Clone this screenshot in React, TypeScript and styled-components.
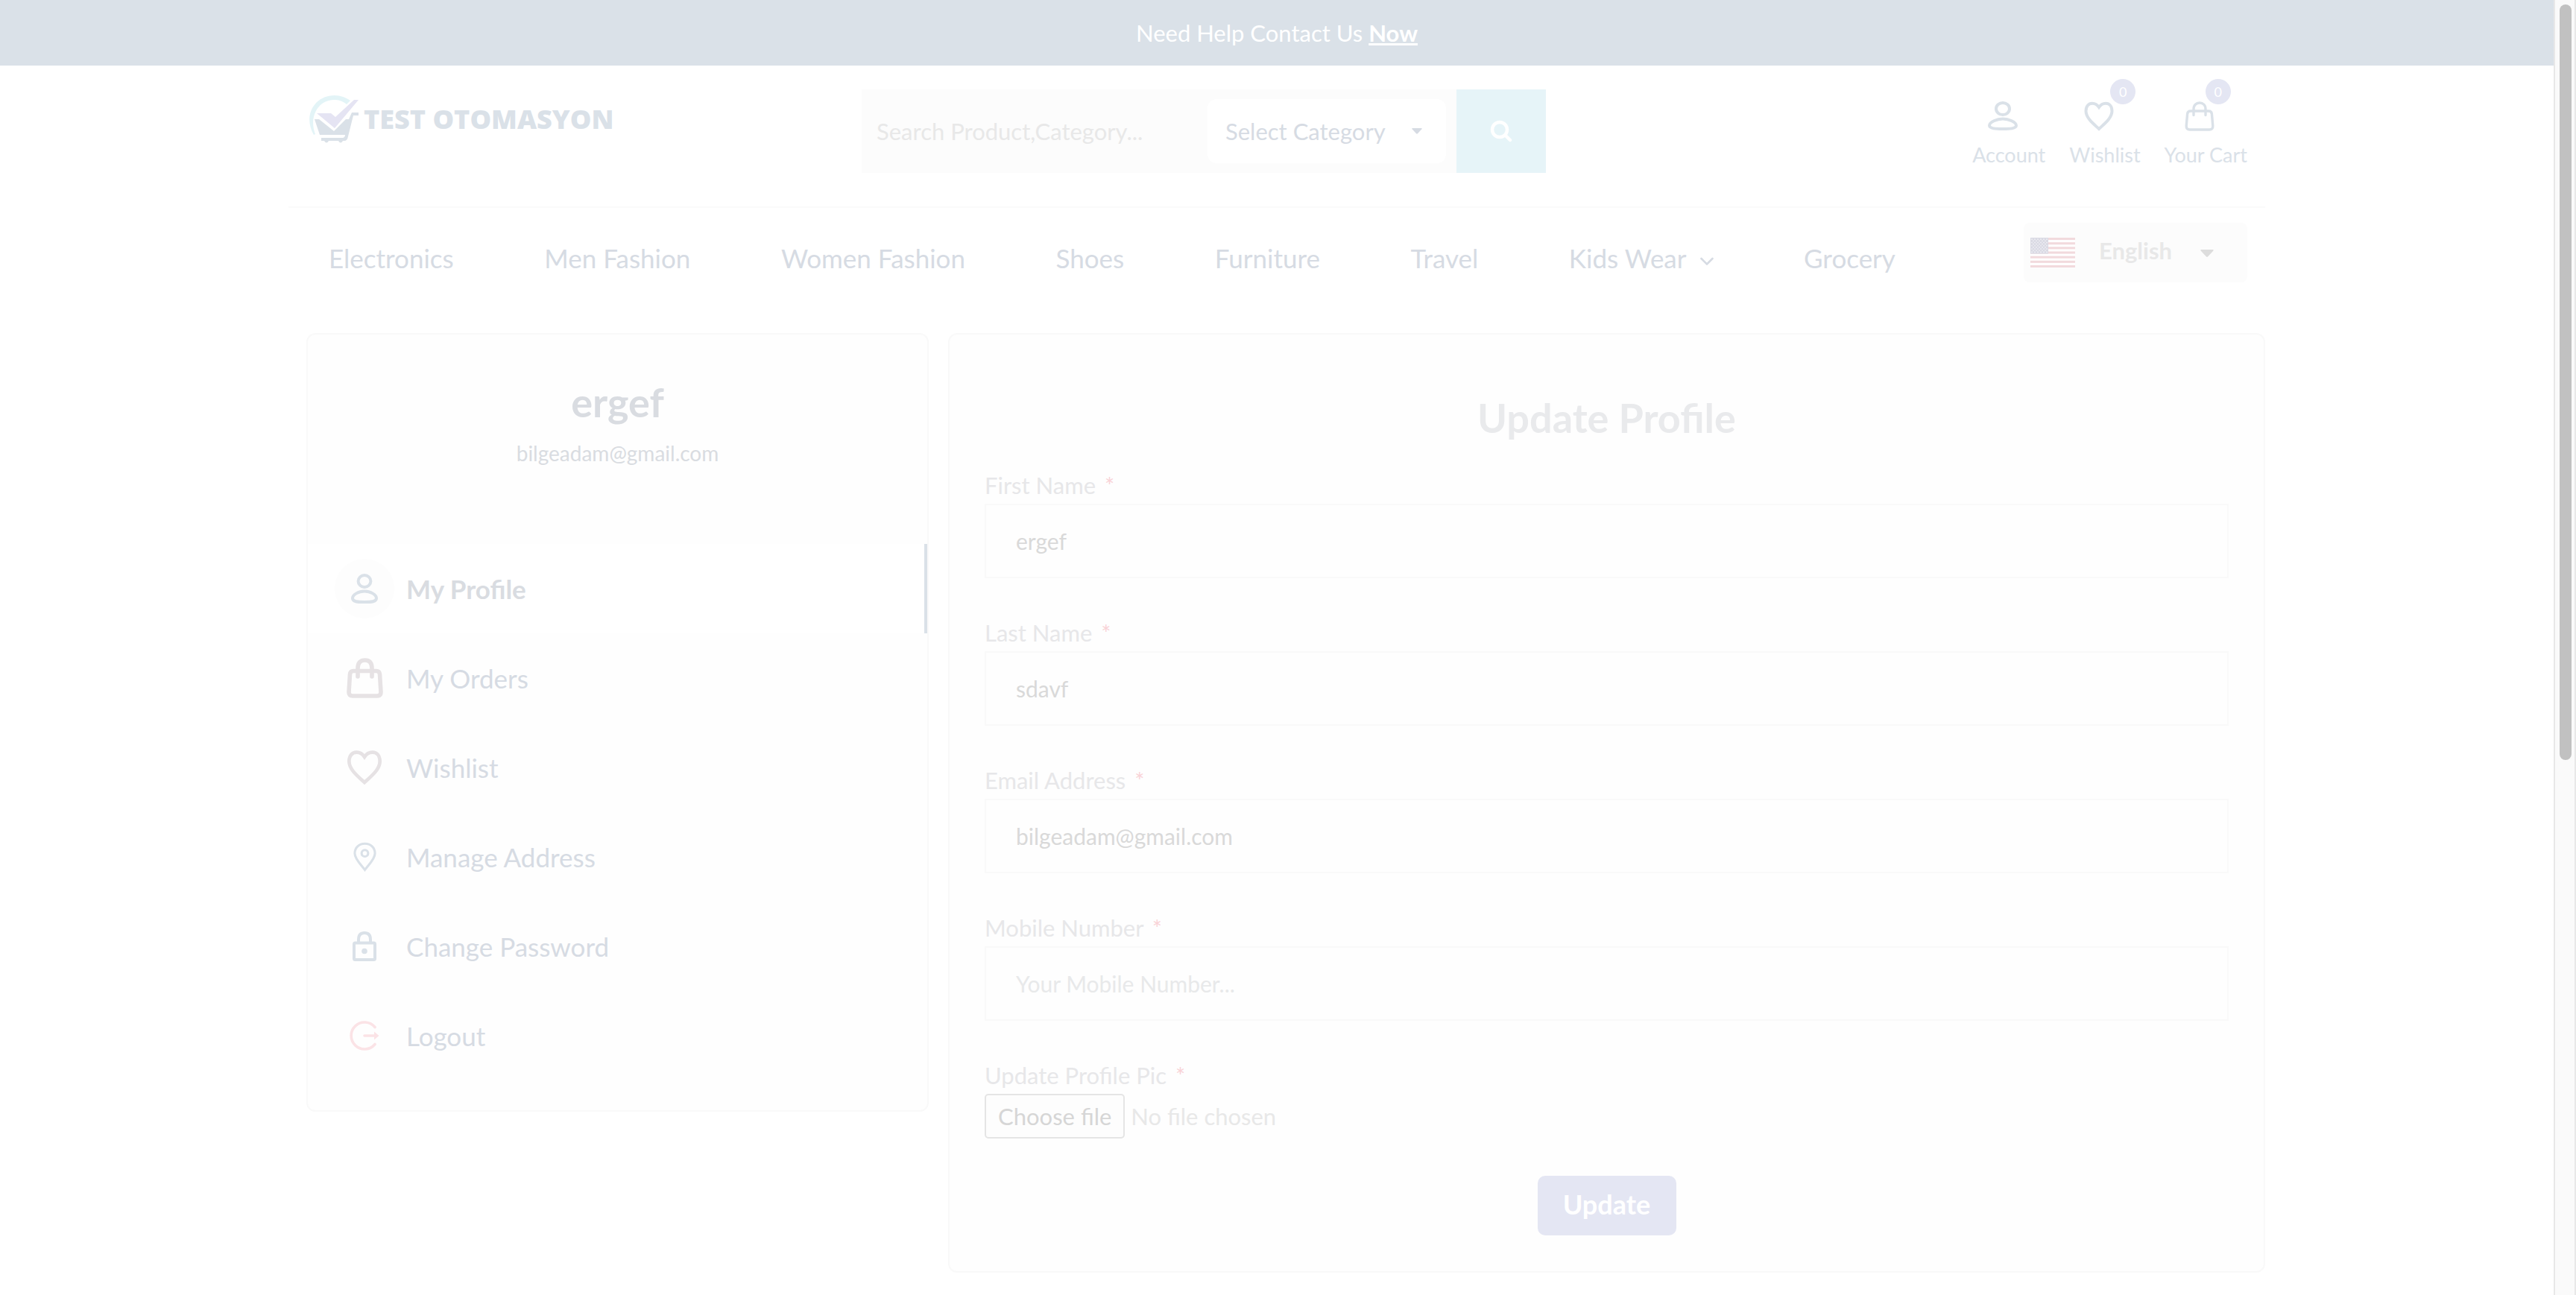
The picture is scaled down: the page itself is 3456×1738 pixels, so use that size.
import React from "react";
import styled, { createGlobalStyle, css } from "styled-components";

const slate = "#dae1e8";
const ink = "#d6dbe3";
const violet = "#e4e6f3";

const GlobalStyle = createGlobalStyle`
  *, *::before, *::after { box-sizing: border-box; }
  body { margin: 0; background: #ffffff; font-family: Lato, "Open Sans", sans-serif; color: ${ink}; }
  h1, h2, p, ul { margin: 0; padding: 0; }
  ul { list-style: none; }
  a { color: inherit; text-decoration: none; }
  button, input, select { font-family: inherit; margin: 0; }
`;

const Shell = styled.div`
  display: flex;
  min-height: 100vh;
`;

const Page = styled.div`
  flex: 1;
  min-width: 0;
`;

const ScrollTrack = styled.div`
  width: 30px;
  padding: 6px;
  background: #fafafa;
  border-left: 2px solid #e8e8e8;
  border-right: 2px solid #e8e8e8;
`;

const ScrollThumb = styled.div`
  width: 16px;
  height: 1014px;
  border-radius: 8px;
  background: #c1c1c1;
`;

const TopBar = styled.div`
  height: 88px;
  background: ${slate};
  color: #ffffff;
  font-size: 31px;
  line-height: 88px;
  text-align: center;

  a { font-weight: 700; text-decoration: underline; }
`;

const Container = styled.div`
  max-width: 2652px;
  margin: 0 auto;
`;

const Header = styled.header`
  display: grid;
  grid-template-columns: 742fr 918fr 941fr;
  align-items: start;
  padding: 32px 24px 45px 27px;
  border-bottom: 2px solid #fbfbfb;
`;

const Logo = styled.a`
  display: flex;
  align-items: center;
  gap: 4px;
  padding-top: 5px;
  color: ${slate};
  font-family: "Open Sans", sans-serif;
  font-size: 36px;
  font-weight: 800;
  line-height: 70px;

  svg { flex: none; }
`;

const Search = styled.form`
  display: flex;
  align-items: center;
  height: 112px;
  background: #fcfcfc;
`;

const SearchInput = styled.input`
  flex: 1;
  min-width: 0;
  height: 100%;
  padding: 0 20px;
  border: 0;
  background: transparent;
  color: #d9d9d9;
  font-size: 31px;

  &::placeholder { color: #e8e8e8; opacity: 1; }
`;

const SelectWrap = styled.span`
  position: relative;
  display: block;

  > svg {
    position: absolute;
    right: 32px;
    top: 50%;
    margin-top: -4px;
    pointer-events: none;
  }
`;

const CategorySelect = styled.select`
  appearance: none;
  width: 320px;
  height: 86px;
  margin-right: 14px;
  padding: 0 24px;
  border: 0;
  border-radius: 12px;
  background: #ffffff;
  color: ${ink};
  font-size: 31px;
`;

const CategoryWrap = styled(SelectWrap)`
  > svg { right: 46px; }
`;

const SearchButton = styled.button`
  display: flex;
  align-items: center;
  justify-content: center;
  width: 120px;
  height: 100%;
  padding: 0;
  border: 0;
  background: #e6f4f8;
  color: #ffffff;
`;

const Actions = styled.nav`
  display: flex;
  justify-content: flex-end;
  gap: 32px;
  padding-top: 16px;
`;

const Action = styled.a`
  position: relative;
  display: flex;
  flex-direction: column;
  align-items: center;
  gap: 14px;
  color: ${slate};
  font-size: 27px;
  line-height: 36px;

  svg { margin-right: 16px; }
`;

const Badge = styled.span`
  position: absolute;
  left: 55px;
  top: -30px;
  width: 34px;
  height: 34px;
  border-radius: 50%;
  background: ${violet};
  color: #ffffff;
  font-size: 18px;
  line-height: 34px;
  text-align: center;
`;

const NavRow = styled.div`
  display: flex;
  align-items: flex-start;
  gap: 172px;
  padding: 20px 24px 54px 54px;
`;

const NavList = styled.ul`
  flex: 1;
  display: flex;
  justify-content: space-between;
  font-size: 35px;
  line-height: 94px;
  white-space: nowrap;

  a { display: flex; align-items: center; gap: 18px; }
`;

const Language = styled.div`
  display: flex;
  align-items: center;
  width: 300px;
  height: 80px;
  padding-left: 9px;
  border-radius: 8px;
  background: #fcfcfc;

  > svg { flex: none; }
  > span { flex: 1; }
  > span > svg { right: 45px; }
`;

const LanguageSelect = styled.select`
  appearance: none;
  width: 100%;
  height: 80px;
  padding: 0 32px 6px;
  border: 0;
  background: transparent;
  color: #e8e8e8;
  font-size: 31px;
  font-weight: 700;
`;

const Columns = styled.main`
  display: grid;
  grid-template-columns: minmax(0, 835px) minmax(0, 1fr);
  gap: 26px;
  align-items: start;
  padding: 0 0 30px 24px;
`;

const Card = styled.section`
  border: 2px solid #f9f9f9;
  border-radius: 12px;
  background: #fefefe;
`;

const AccountCard = styled(Card)`
  padding-bottom: 40px;
`;

const AccountHead = styled.div`
  padding: 55px 0 102px;
  color: #d9dce1;
  text-align: center;
`;

const Title = styled.h1`
  font-size: 54px;
  font-weight: 700;
  line-height: 72px;
`;

const AccountEmail = styled.p`
  margin-top: 12px;
  font-size: 28px;
  line-height: 40px;
`;

const MenuLink = styled.a<{ $active?: boolean }>`
  display: flex;
  align-items: center;
  gap: 16px;
  height: 120px;
  padding-left: 36px;
  font-size: 35px;
  ${(p) =>
    p.$active &&
    css`
      border-right: 4px solid ${slate};
      background: #ffffff;
      color: #d9dce1;
      font-weight: 700;
    `}
`;

const MenuIcon = styled.span<{ $tint: string; $active?: boolean }>`
  display: flex;
  align-items: center;
  justify-content: center;
  width: 80px;
  height: 80px;
  border-radius: 50%;
  background: ${(p) => (p.$active ? "#fdfdfd" : "#fefefe")};
  color: ${(p) => p.$tint};
`;

const ProfileCard = styled(Card)`
  padding: 76px 47px 48px;
`;

const FormTitle = styled(Title).attrs({ as: "h2" })`
  margin-bottom: 34px;
  color: #e9eaec;
  text-align: center;
`;

const ProfileForm = styled.form`
  display: flex;
  flex-direction: column;
  gap: 50px;
`;

const Fields = styled.div`
  display: flex;
  flex-direction: column;
  gap: 53px;
`;

const Field = styled.div`
  display: flex;
  flex-direction: column;
  gap: 5px;
`;

const FieldLabel = styled.label`
  color: #e7e7e9;
  font-size: 31px;
  line-height: 40px;

  span { margin-left: 4px; color: #f9d3d7; }
`;

const TextInput = styled.input`
  width: 100%;
  height: 100px;
  padding: 0 40px;
  border: 2px solid #f9f9f9;
  background: #fefefe;
  color: #d9d9d9;
  font-size: 30px;

  &::placeholder { color: #e8e9ea; opacity: 1; }
`;

const FileRow = styled.div`
  position: relative;
  display: flex;
  align-items: center;
  gap: 8px;
  color: #e8e8e8;
  font-size: 31px;
`;

const FileInput = styled.input`
  position: absolute;
  width: 1px;
  height: 1px;
  opacity: 0;
`;

const FileButton = styled.label`
  height: 60px;
  padding: 0 16px;
  border: 2px solid #e5e5e5;
  border-radius: 5px;
  background: #fdfdfd;
  color: #d6d6d6;
  line-height: 56px;
`;

const SubmitButton = styled.button`
  align-self: center;
  width: 186px;
  height: 80px;
  padding: 0 0 4px;
  border: 0;
  border-radius: 10px;
  background: ${violet};
  color: #ffffff;
  font-size: 36px;
  font-weight: 700;
`;

type IconProps = { stroke?: number };

const UserIcon = () => (
  <svg width="40" height="40" viewBox="0 0 40 40" fill="none" stroke="currentColor" strokeWidth="4">
    <ellipse cx="20" cy="10" rx="9" ry="8" />
    <path d="M20 23.5C28 23.5 38 28 38 32.5C38 36.5 29 37 20 37S2 36.5 2 32.5C2 28 12 23.5 20 23.5Z" />
  </svg>
);

const ProfileIcon = () => (
  <svg width="36" height="40" viewBox="0 0 36 40" fill="none" stroke="currentColor" strokeWidth="4">
    <ellipse cx="18" cy="10" rx="8.4" ry="8" />
    <path d="M18 23.5C26 23.5 34 28 34 33C34 37.5 28 38 18 38S2 37.5 2 33C2 28 10 23.5 18 23.5Z" />
  </svg>
);

const HeartIcon = ({ width = 40, height = 40, stroke = 4 }: IconProps & { width?: number; height?: number }) => (
  <svg width={width} height={height} viewBox="0 0 40 39" fill="none" stroke="currentColor" strokeWidth={stroke}>
    <path d="M20 36.5C13 30 2.5 22 2.5 12.5C2.5 6 6 2.3 11 2.3C15 2.3 18 4.5 20 7.5C22 4.5 25 2.3 29 2.3C34 2.3 37.5 6 37.5 12.5C37.5 22 27 30 20 36.5Z" />
  </svg>
);

const BagIcon = ({ stroke = 3.4 }: IconProps) => (
  <svg width="40" height="40" viewBox="0 0 40 40" fill="none" stroke="currentColor" strokeWidth={stroke} strokeLinecap="round" strokeLinejoin="round">
    <path d="M8 13H32Q36 13 36.4 17L37.8 33Q38 38 33 38H7Q2 38 2.2 33L3.6 17Q4 13 8 13Z" />
    <path d="M12 18.5V10.5C12 5 15.5 2 20 2S28 5 28 10.5V18.5" />
  </svg>
);

const OrdersIcon = () => (
  <svg width="49" height="54" viewBox="0 0 49 54" fill="none" stroke="currentColor" strokeWidth="5.6" strokeLinecap="round" strokeLinejoin="round">
    <path d="M9 17.5H40Q44 17.5 44.5 22L46 46Q46 51 41 51H8Q3 51 3 46L4.5 22Q5 17.5 9 17.5Z" />
    <path d="M15 25V14C15 6 19 3 24.500 3S34 6 34 14V25" />
  </svg>
);

const PinIcon = () => (
  <svg width="31" height="40" viewBox="0 0 32 40" fill="none" stroke="currentColor" strokeWidth="3.2">
    <path d="M16 38C11 31 2 23 2 15C2 7 8 1.6 16 1.6S30 7 30 15C30 23 21 31 16 38Z" />
    <circle cx="16" cy="15" r="4.5" />
  </svg>
);

const LockIcon = () => (
  <svg width="32" height="40" viewBox="0 0 32 40" fill="none" stroke="currentColor" strokeWidth="4">
    <rect x="2" y="15.500" width="28" height="22.500" rx="1.500" />
    <path d="M8 15V11C8 5 11 2 16 2S24 5 24 11V15" />
    <circle cx="16" cy="26.5" r="3.8" fill="currentColor" stroke="none" />
  </svg>
);

const LogoutIcon = () => (
  <svg width="40" height="40" viewBox="0 0 40 40" fill="none" stroke="currentColor" strokeWidth="3.6" strokeLinecap="round">
    <path d="M34 8.5A18 18 0 1 0 34 31.5" />
    <path d="M20 20H34" />
    <path d="M33 14.5L39.5 20L33 25.5Z" fill="currentColor" stroke="none" />
  </svg>
);

const SearchIcon = () => (
  <svg width="30" height="30" viewBox="0 0 30 30" fill="none" stroke="currentColor" strokeWidth="4.5" strokeLinecap="round">
    <circle cx="13" cy="13" r="10" />
    <path d="M20.5 20.5L27 27" />
  </svg>
);

const Caret = ({ width, height, color }: { width: number; height: number; color: string }) => (
  <svg width={width} height={height} viewBox="0 0 18 10" preserveAspectRatio="none" fill={color}>
    <path d="M1.5 0H16.5Q18.6 .4 17 2L10.2 9.2Q9 10.4 7.8 9.2L1 2Q-.6 .4 1.5 0Z" />
  </svg>
);

const Chevron = () => (
  <svg width="18" height="24" viewBox="0 0 18 24" fill="none" stroke="currentColor" strokeWidth="2.6" strokeLinecap="round" strokeLinejoin="round">
    <path d="M1.5 13L9 20.5L16.5 13" />
  </svg>
);

const LogoMark = () => (
  <svg width="70" height="70" viewBox="0 0 70 70">
    <path d="M7 56C-8 30 8 3 35 3C43 3 50 6 56 10L51 15C45 10 40 9 34 9C13 9 0 32 9 55Z" fill="#e3f4f7" />
    <path d="M11 27H30L36 32L61 9H67L35 47Z" fill="#e5e4f3" />
    <path d="M8 35H14L34 51L50 35H54L58 26H67V30H60L53 58Q52 64 48 64H46Q43 69 40 64H27Q24 69 21 64H17V60H46Q49 59 49 56H15Z" fill={slate} />
  </svg>
);

const UsFlag = () => (
  <svg width="60" height="40" viewBox="0 0 60 39" preserveAspectRatio="none">
    <rect width="60" height="39" fill="#ffffff" />
    {Array.from({ length: 7 }, (_, i) => (
      <rect key={i} y={i * 6} width="60" height="3" fill="#f2dadd" />
    ))}
    <rect width="24" height="21" fill="#dadae4" />
    {Array.from({ length: 9 }, (_, row) =>
      Array.from({ length: row % 2 ? 5 : 6 }, (_, col) => (
        <circle key={`${row}-${col}`} cx={2 + col * 4 + (row % 2) * 2} cy={2.1 + row * 2.1} r="0.8" fill="#f4f4f8" />
      ))
    )}
  </svg>
);

const categories = ["Electronics", "Men Fashion", "Women Fashion", "Shoes", "Furniture", "Travel", "Kids Wear", "Grocery"];

const menu = [
  { label: "My Profile", icon: <ProfileIcon />, tint: slate, active: true },
  { label: "My Orders", icon: <OrdersIcon />, tint: "#e6e2e4" },
  { label: "Wishlist", icon: <HeartIcon width={48} height={46} />, tint: "#e6e2e4" },
  { label: "Manage Address", icon: <PinIcon />, tint: slate },
  { label: "Change Password", icon: <LockIcon />, tint: slate },
  { label: "Logout", icon: <LogoutIcon />, tint: "#fbe3e6" },
];

const textFields = [
  { id: "first-name", label: "First Name", value: "ergef" },
  { id: "last-name", label: "Last Name", value: "sdavf" },
  { id: "email", label: "Email Address", value: "bilgeadam@gmail.com", type: "email" },
  { id: "mobile", label: "Mobile Number", placeholder: "Your Mobile Number...", type: "tel" },
];

export default function App() {
  return (
    <Shell>
      <GlobalStyle />
      <Page>
        <TopBar>
          Need Help Contact Us <a href="#contact">Now</a>
        </TopBar>
        <Container>
          <Header>
            <Logo href="#home">
              <LogoMark />
              TEST OTOMASYON
            </Logo>
            <Search role="search">
              <SearchInput type="text" placeholder="Search Product,Category..." aria-label="Search products" />
              <CategoryWrap>
                <CategorySelect aria-label="Category">
                  <option>Select Category</option>
                </CategorySelect>
                <Caret width={14} height={8} color={ink} />
              </CategoryWrap>
              <SearchButton type="button" aria-label="Search">
                <SearchIcon />
              </SearchButton>
            </Search>
            <Actions aria-label="Account">
              <Action href="#account">
                <UserIcon />
                Account
              </Action>
              <Action href="#wishlist">
                <HeartIcon />
                Wishlist
                <Badge>0</Badge>
              </Action>
              <Action href="#cart">
                <BagIcon />
                Your Cart
                <Badge>0</Badge>
              </Action>
            </Actions>
          </Header>
          <NavRow>
            <NavList>
              {categories.map((name) => (
                <li key={name}>
                  <a href="#category">
                    {name}
                    {name === "Kids Wear" && <Chevron />}
                  </a>
                </li>
              ))}
            </NavList>
            <Language>
              <UsFlag />
              <SelectWrap>
                <LanguageSelect aria-label="Language">
                  <option>English</option>
                </LanguageSelect>
                <Caret width={18} height={10} color="#dddddd" />
              </SelectWrap>
            </Language>
          </NavRow>
          <Columns>
            <AccountCard>
              <AccountHead>
                <Title>ergef</Title>
                <AccountEmail>bilgeadam@gmail.com</AccountEmail>
              </AccountHead>
              <ul>
                {menu.map((item) => (
                  <li key={item.label}>
                    <MenuLink href="#menu" $active={item.active}>
                      <MenuIcon $tint={item.tint} $active={item.active}>
                        {item.icon}
                      </MenuIcon>
                      {item.label}
                    </MenuLink>
                  </li>
                ))}
              </ul>
            </AccountCard>
            <ProfileCard>
              <FormTitle>Update Profile</FormTitle>
              <ProfileForm>
                <Fields>
                  {textFields.map((field) => (
                    <Field key={field.id}>
                      <FieldLabel htmlFor={field.id}>
                        {field.label} <span>*</span>
                      </FieldLabel>
                      <TextInput id={field.id} type={field.type ?? "text"} defaultValue={field.value} placeholder={field.placeholder} />
                    </Field>
                  ))}
                  <Field>
                    <FieldLabel htmlFor="picture">
                      Update Profile Pic <span>*</span>
                    </FieldLabel>
                    <FileRow>
                      <FileInput id="picture" type="file" />
                      <FileButton htmlFor="picture">Choose file</FileButton>
                      <span>No file chosen</span>
                    </FileRow>
                  </Field>
                </Fields>
                <SubmitButton type="button">Update</SubmitButton>
              </ProfileForm>
            </ProfileCard>
          </Columns>
        </Container>
      </Page>
      <ScrollTrack>
        <ScrollThumb />
      </ScrollTrack>
    </Shell>
  );
}
